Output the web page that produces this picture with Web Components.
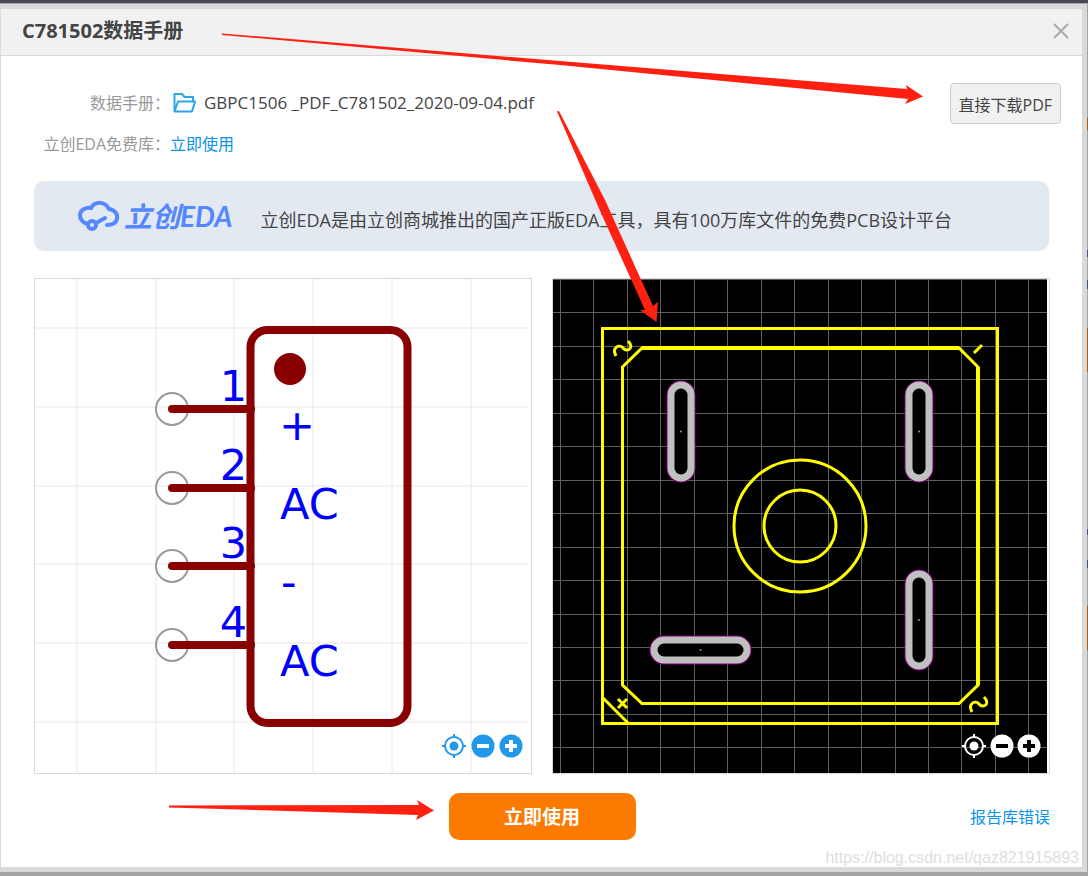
<!DOCTYPE html>
<html lang="zh-CN">
<head>
<meta charset="utf-8">
<meta name="viewport" content="width=device-width, initial-scale=1">
<title>C781502数据手册</title>
<style>
  body {
    margin: 0;
    font-family: "Open Sans", "Noto Sans CJK SC", sans-serif;
    font-size: 16px;
    color: #444;
    background: #a5a5a5;
  }
</style>
</head>
<body>
<datasheet-dialog heading="C781502数据手册">
  <datasheet-info></datasheet-info>
  <eda-banner>立创EDA是由立创商城推出的国产正版EDA工具，具有100万库文件的免费PCB设计平台</eda-banner>
  <preview-pair>
    <preview-panel><symbol-drawing></symbol-drawing></preview-panel>
    <preview-panel dark><footprint-drawing></footprint-drawing></preview-panel>
  </preview-pair>
  <dialog-actions></dialog-actions>
</datasheet-dialog>

<script>
function define(name, html) {
  customElements.define(name, class extends HTMLElement {
    constructor() {
      super();
      this.attachShadow({ mode: 'open' });
      this.shadowRoot.innerHTML = html;
    }
  });
}

class DatasheetDialog extends HTMLElement {
  constructor() {
    super();
    this.attachShadow({ mode: 'open' });
    this.shadowRoot.innerHTML = `
      <style>
        :host {
          display: block;
          position: relative;
          box-sizing: border-box;
          padding-right: 1px;
          border-top: 3px solid #4b4955;
          border-bottom: 4px solid #a5a5a5;
          /* sliver of the page behind the dialog */
          background: linear-gradient(#a5a5a5 115px,
            #b55a05 115px 127px, #a5a5a5 127px 247px,
            #3a5585 247px 254px, #a5a5a5 254px 277px,
            #3a5585 277px 286px, #a5a5a5 286px 325px,
            #b55a05 325px 369px, #a5a5a5 369px 526px,
            #3a5585 526px 532px, #a5a5a5 532px 557px,
            #3a5585 557px 565px, #a5a5a5 565px 603px,
            #b55a05 603px 647px, #a5a5a5 647px);
        }
        .frame {
          background: #d9d9d9;
          border-top: 1px solid #a5a5a5;
          padding: 5px 5px 5px 1px;
        }
        .dialog { background: #fff; }
        header {
          display: flex;
          align-items: center;
          justify-content: space-between;
          box-sizing: border-box;
          height: 47px;
          padding: 0 12px 2px 21px;
          background: #f1f1f1;
          border-bottom: 1px solid #d9d9d9;
        }
        h1 { margin: 0; font-size: 20px; line-height: 24px; }
        header button {
          display: flex;
          padding: 0;
          border: 0;
          background: none;
          cursor: pointer;
        }
        main { padding: 27px 32px 27px 33px; }
        .marks {
          position: absolute;
          left: 0;
          top: -3px;
          width: 100%;
          pointer-events: none;
        }
        .watermark {
          position: absolute;
          right: 9px;
          bottom: 4px;
          font: 16px/20px "Liberation Sans", sans-serif;
          color: #dedede;
        }
      </style>
      <div class="frame">
        <div class="dialog">
          <header>
            <h1></h1>
            <button aria-label="关闭">
              <svg width="18" height="18" viewBox="0 0 18 18" stroke="#aaa" stroke-width="2">
                <path d="M2 2 16 16M16 2 2 16"/>
              </svg>
            </button>
          </header>
          <main><slot></slot></main>
        </div>
      </div>
      <svg class="marks" viewBox="0 0 1088 876" fill="#ff2012">
        <path d="M222 33.500 560 61 907 89 906 85 923 96.500 905 104 908 99 560 65 222 35Z"/>
        <path d="M557 111.500 559 111 605 200 653 306 658 302 656.500 322 640 310 645 310 601 213Z"/>
        <path d="M169 805.500 419 805 417 800 434 810.500 416 820 418 815 169 807.500Z"/>
      </svg>
      <span class="watermark">https://blog.csdn.net/qaz821915893</span>
    `;
  }

  static get observedAttributes() {
    return ['heading'];
  }

  attributeChangedCallback(name, oldVal, newVal) {
    this.shadowRoot.querySelector('h1').textContent = newVal;
  }
}
customElements.define('datasheet-dialog', DatasheetDialog);

define('datasheet-info', `
  <style>
    :host {
      display: flex;
      justify-content: space-between;
      align-items: flex-start;
      margin-right: -11px;
    }
    dl {
      display: grid;
      grid-template-columns: 136px auto;
      row-gap: 17px;
      margin: 8px 0 0;
      line-height: 24px;
    }
    dt { color: #999; text-align: right; white-space: nowrap; }
    dd { display: flex; align-items: center; gap: 8px; margin: 0; }
    dd.file { padding-left: 3px; }
    a { color: #0d93e8; text-decoration: none; }
    .file a { color: #444; font-size: 17px; }
    button {
      padding: 0 8px;
      height: 41px;
      font: inherit;
      color: #444;
      background: #f1f1f1;
      border: 1px solid #ccc;
      border-radius: 4px;
      cursor: pointer;
    }
  </style>
  <dl>
    <dt>数据手册：</dt>
    <dd class="file">
      <svg width="23" height="20" viewBox="0 0 23 20" fill="none" stroke="#2ba4e9" stroke-width="2" stroke-linejoin="round">
        <path d="M1.500 18.500V1H9L11.500 4H20V8M1.500 18.500 5 8.500H22L19 18.500Z"/>
      </svg>
      <a href="#">GBPC1506 _PDF_C781502_2020-09-04.pdf</a>
    </dd>
    <dt>立创EDA免费库：</dt>
    <dd><a href="#">立即使用</a></dd>
  </dl>
  <button>直接下载PDF</button>
`);

define('eda-banner', `
  <style>
    :host {
      display: flex;
      align-items: center;
      gap: 28px;
      box-sizing: border-box;
      height: 70px;
      margin: 25px 1px 0 0;
      padding: 0 44px;
      background: #e2e9f1;
      border-radius: 10px;
    }
    .logo { display: flex; align-items: center; gap: 4px; color: #5588ff; }
    .name {
      font: italic bold 28px/30px "Lato", "Noto Sans CJK SC", sans-serif;
      white-space: nowrap;
    }
    p { margin: 0; padding-top: 7px; font-size: 18px; line-height: 26px; }
  </style>
  <div class="logo">
    <svg width="42" height="32" viewBox="0 0 42 32" fill="none" stroke="currentColor" stroke-width="4" stroke-linecap="round">
      <path d="M9 24C4 22 2 18 2 15 2 10 8 7 13 8 17 1 27 1 31 9 37 10 40 14 39 19 38 23 35 25 29 25"/>
      <circle cx="14" cy="25" r="4"/>
      <path d="M18 23 27 18"/>
    </svg>
    <span class="name">立创EDA</span>
  </div>
  <p><slot></slot></p>
`);

define('preview-pair', `
  <style>
    :host {
      display: grid;
      grid-template-columns: 1fr 1fr;
      gap: 20px;
      margin-top: 27px;
    }
  </style>
  <slot></slot>
`);

define('preview-panel', `
  <style>
    :host {
      display: block;
      position: relative;
      border: 1px solid #d9d9d9;
      color: #2199e8;
      --sign: #fff;
    }
    :host([dark]) { color: #fff; --sign: #000; }
    .tools {
      position: absolute;
      right: 8px;
      bottom: 14px;
      display: flex;
      gap: 4px;
    }
    :host([dark]) .tools { gap: 3px; }
    button {
      display: flex;
      padding: 0;
      border: 0;
      background: none;
      color: inherit;
      cursor: pointer;
    }
  </style>
  <slot></slot>
  <div class="tools">
    <button aria-label="居中">
      <svg width="26" height="26" viewBox="0 0 26 26" fill="none" stroke="currentColor" stroke-width="2">
        <circle cx="13" cy="13" r="9"/>
        <path d="M13 1V5M13 21V25M1 13H5M21 13H25"/>
        <circle cx="13" cy="13" r="4.500" fill="currentColor" stroke="none"/>
      </svg>
    </button>
    <button aria-label="缩小">
      <svg width="24" height="26" viewBox="0 0 24 26">
        <circle cx="12" cy="13" r="11.500" fill="currentColor"/>
        <path d="M6 13H18" stroke="var(--sign)" stroke-width="4"/>
      </svg>
    </button>
    <button aria-label="放大">
      <svg width="24" height="26" viewBox="0 0 24 26">
        <circle cx="12" cy="13" r="11.500" fill="currentColor"/>
        <path d="M6 13H18M12 7V19" stroke="var(--sign)" stroke-width="4"/>
      </svg>
    </button>
  </div>
`);

// Drawing units: one unit is one pixel at the dialog's usual width.
class SymbolDrawing extends HTMLElement {
  constructor() {
    super();
    this.attachShadow({ mode: 'open' });

    const columns = [42, 121, 199, 278, 357, 436];
    const rows = [49, 128, 207, 285, 364, 443];
    const pins = rows.slice(1, 5).map((y, i) => `
      <circle cx="137" cy="${y + 2}" r="16" fill="none" stroke="#999" stroke-width="2"/>
      <path d="M137 ${y + 2}H216" stroke="#880000" stroke-width="8" stroke-linecap="round"/>
      <text x="212" y="${y - 6}" text-anchor="end">${i + 1}</text>
    `).join('');

    this.shadowRoot.innerHTML = `
      <style>
        :host { display: block; }
        svg { display: block; width: 100%; }
        text { font: 43px "DejaVu Sans", sans-serif; fill: #00f; }
      </style>
      <svg viewBox="0 0 496 494">
        <path d="${columns.map(x => `M${x} 0V494`).join('')}${rows.map(y => `M0 ${y}H493`).join('')}" stroke="#e8e8e8" stroke-width="1"/>
        <rect x="215.500" y="51" width="157" height="393" rx="17" fill="none" stroke="#880000" stroke-width="8"/>
        <circle cx="255" cy="90" r="16" fill="#880000"/>
        ${pins}
        <text x="244" y="161">+</text>
        <text x="245" y="240">AC</text>
        <text x="246" y="318">-</text>
        <text x="245" y="397">AC</text>
      </svg>
    `;
  }
}
customElements.define('symbol-drawing', SymbolDrawing);

class FootprintDrawing extends HTMLElement {
  constructor() {
    super();
    this.attachShadow({ mode: 'open' });

    let grid = '';
    for (let i = 0; i < 15; i++) {
      const at = Math.round(i * 33.45);
      grid += `M${at + 7} 0V494M0 ${at}H494`;
    }

    // a slot is the stroke of a short line: mask edge, copper, then the hole
    const pads = [
      [128, 116, 128, 189],
      [366, 116, 366, 189],
      [366, 305, 366, 377],
      [111, 371, 184, 371]
    ].map(([x1, y1, x2, y2]) => {
      const d = `M${x1} ${y1}L${x2} ${y2}`;
      return `
        <path d="${d}" stroke="#800080" stroke-width="29"/>
        <path d="${d}" stroke="#c0c0c0" stroke-width="27"/>
        <path d="${d}" stroke="#000" stroke-width="13"/>
        <circle cx="${(x1 + x2) / 2}" cy="${(y1 + y2) / 2}" r="1" fill="#999"/>
      `;
    }).join('');

    this.shadowRoot.innerHTML = `
      <style>
        :host { display: block; }
        svg { display: block; width: 100%; }
      </style>
      <svg viewBox="0 0 496 494" fill="none">
        <path d="M0 0H494V494H0Z" fill="#000"/>
        <path d="${grid}" stroke="#5f5f5f" stroke-width="1" shape-rendering="crispEdges"/>
        <g stroke="#ff0" stroke-width="3">
          <path d="M49.500 49.500H444.500V444.500H49.500Z"/>
          <path d="M89 69H406L425 88V406L406 424.500H89L69.500 406V88Z"/>
          <path d="M89 69H406M425 88V406" stroke-width="4"/>
          <circle cx="247" cy="247" r="66"/>
          <circle cx="247" cy="247" r="36"/>
          <path d="M50 419 75 444M421 74 429 66M65 420 74 429M74 420 65 429"/>
          <path d="M63 77C58 68 67 65 70 69 74 74 82 69 75 62"/>
          <path d="M419 433C414 424 423 421 426 425 430 430 438 425 431 418"/>
        </g>
        <g stroke-linecap="round">${pads}</g>
      </svg>
    `;
  }
}
customElements.define('footprint-drawing', FootprintDrawing);

define('dialog-actions', `
  <style>
    :host {
      display: grid;
      grid-template-columns: 1fr auto 1fr;
      align-items: center;
      margin-top: 19px;
    }
    button {
      grid-column: 2;
      width: 187px;
      height: 47px;
      padding: 0 0 2px;
      border: 0;
      border-radius: 10px;
      background: #fd7a00;
      color: #fff;
      font: bold 19px "Open Sans", "Noto Sans CJK SC", sans-serif;
      cursor: pointer;
    }
    a { justify-self: end; padding-bottom: 2px; color: #0d93e8; text-decoration: none; }
  </style>
  <button>立即使用</button>
  <a href="#">报告库错误</a>
`);
</script>
</body>
</html>
